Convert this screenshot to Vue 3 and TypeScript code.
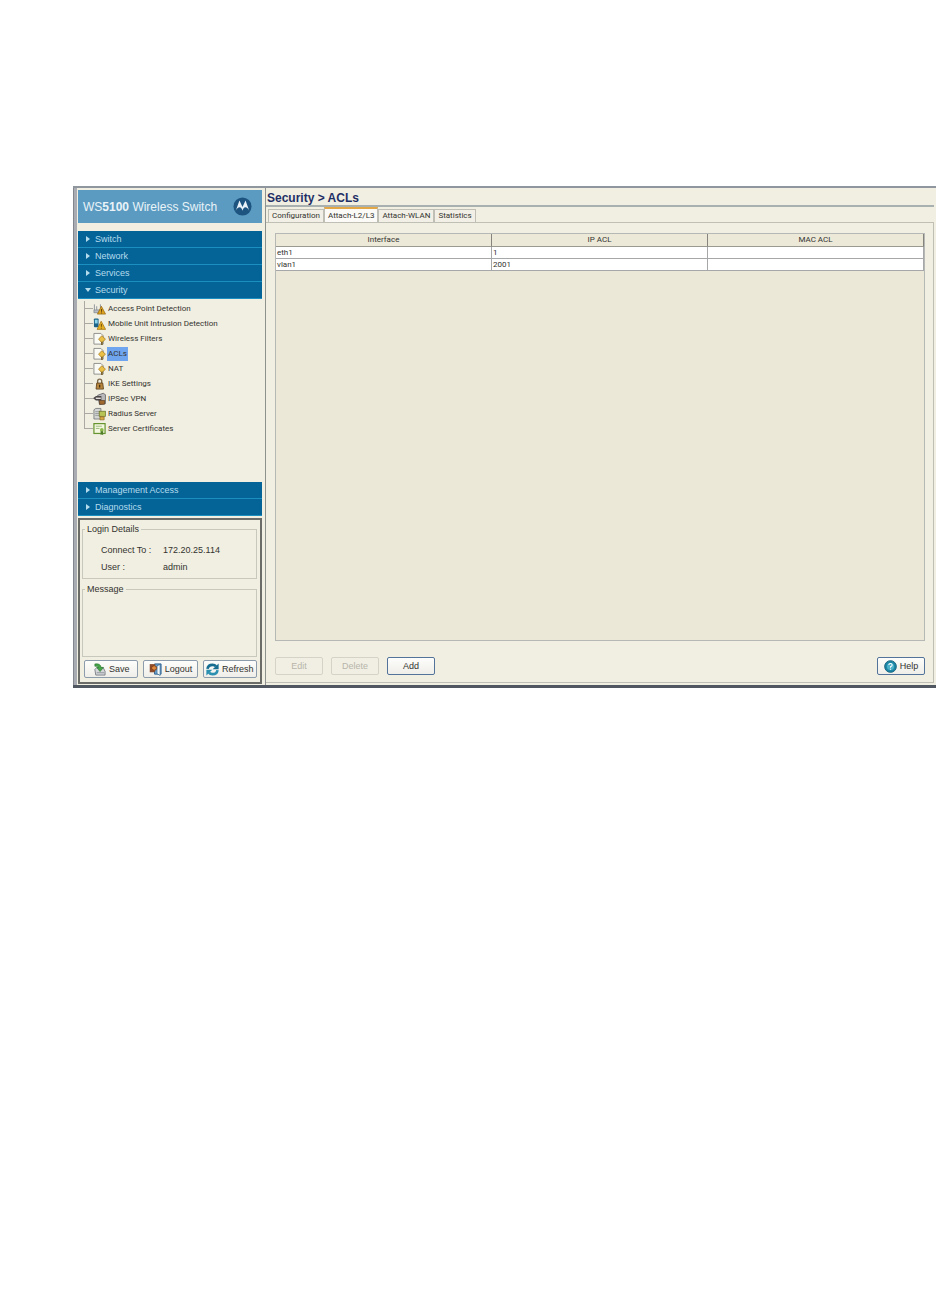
<script setup lang="ts">
import { ref } from 'vue'

type IconName = 'ap' | 'mobile' | 'filter' | 'lock' | 'vpn' | 'radius' | 'cert'

interface TreeItem {
  label: string
  icon: IconName
}

const topSections: string[] = ['Switch', 'Network', 'Services', 'Security']
const bottomSections: string[] = ['Management Access', 'Diagnostics']
const openSection = 'Security'

const items: TreeItem[] = [
  { label: 'Access Point Detection', icon: 'ap' },
  { label: 'Mobile Unit Intrusion Detection', icon: 'mobile' },
  { label: 'Wireless Filters', icon: 'filter' },
  { label: 'ACLs', icon: 'filter' },
  { label: 'NAT', icon: 'filter' },
  { label: 'IKE Settings', icon: 'lock' },
  { label: 'IPSec VPN', icon: 'vpn' },
  { label: 'Radius Server', icon: 'radius' },
  { label: 'Server Certificates', icon: 'cert' },
]
const selected = ref('ACLs')

const tabs: string[] = ['Configuration', 'Attach-L2/L3', 'Attach-WLAN', 'Statistics']
const activeTab = ref('Attach-L2/L3')

const columns: string[] = ['Interface', 'IP ACL', 'MAC ACL']
const rows: string[][] = [
  ['eth1', '1', ''],
  ['vlan1', '2001', ''],
]
</script>

<template>
  <div class="page">
    <div class="window">
      <aside class="side">
        <header class="brand">
          <span class="brand-name">WS<b>5100</b> Wireless Switch</span>
          <svg class="logo" viewBox="0 0 20 20" aria-hidden="true">
            <circle cx="10" cy="10" r="9.5" fill="#1d5480" />
            <path d="M2.8 14.8 6.8 3.8 10 10.6 13.2 3.8 17.2 14.8C16 12 14.6 10.8 13 10.8 11.6 10.8 10.7 12.2 10 14.4 9.3 12.2 8.4 10.8 7 10.8 5.4 10.8 4 12 2.8 14.8Z" fill="#e8f2f8" />
          </svg>
        </header>

        <nav class="nav">
          <button v-for="s in topSections" :key="s" type="button" class="section">
            <svg class="arrow" viewBox="0 0 6 6" aria-hidden="true">
              <path :d="s === openSection ? 'M0 1H6L3 5Z' : 'M1 0V6L5 3Z'" fill="#b5dced" />
            </svg>
            {{ s }}
          </button>

          <ul class="tree">
            <li v-for="item in items" :key="item.label" class="node">
              <svg class="icon" viewBox="0 0 14 14" aria-hidden="true">
                <g v-if="item.icon === 'ap'">
                  <path d="M1.5 2V8M4 4V8M8 2V6" stroke="#8d9299" fill="none" />
                  <path d="M1 8H8V11H1Z" fill="#b9bdc4" stroke="#777d86" stroke-width=".7" />
                  <path d="M9 4 13.5 12.5H4.8Z" fill="#dda422" stroke="#96680f" stroke-width=".8" />
                  <path d="M9.2 7V10M9.2 10.8V11.8" stroke="#5c3b06" />
                </g>
                <g v-else-if="item.icon === 'mobile'">
                  <rect x="1" y="1" width="5" height="9.5" rx="1" fill="#1b6387" />
                  <rect x="2" y="2.4" width="3" height="4" fill="#8ed5ed" />
                  <path d="M8.8 4 13.6 12.8H4.4Z" fill="#e5b123" stroke="#a37211" stroke-width=".8" />
                  <path d="M9 7V10M9 11V12" stroke="#694509" />
                </g>
                <g v-else-if="item.icon === 'filter'">
                  <path d="M1 1H8.5L11 3.5V12.5H1Z" fill="#fbfbf6" stroke="#8b8b89" />
                  <path d="M9.5 3.4 13.4 7.2 9.5 11 6 7.2Z" fill="#e9bf45" stroke="#a47a1e" stroke-width=".8" />
                  <path d="M9.6 10V13.4" stroke="#70551f" stroke-width="1.6" />
                </g>
                <g v-else-if="item.icon === 'lock'">
                  <path d="M5 6V4Q5 1.7 7.2 1.7T9.4 4V6" fill="none" stroke="#7d6849" stroke-width="1.5" />
                  <path d="M4 6H10.5L11.3 12.5H3.3Z" fill="#b7863e" stroke="#5b3f1b" stroke-width=".9" />
                  <path d="M7.2 7.8V10.8" stroke="#3d2811" stroke-width="1.3" />
                </g>
                <g v-else-if="item.icon === 'vpn'">
                  <path d="M5 3 11 .8 13.4 2.4V12L7 13Z" fill="#b9b9bb" stroke="#565559" stroke-width=".8" />
                  <path d="M0 6.3 3.2 3.8H9V8.6H3.2Z" fill="#4b4748" />
                  <path d="M3 6.2H8.4" stroke="#f3eee9" stroke-width="1.4" />
                  <rect x="7.2" y="8.6" width="5.2" height="4" fill="#a0692f" stroke="#59391a" stroke-width=".7" />
                </g>
                <g v-else-if="item.icon === 'radius'">
                  <path d="M1 2.5 3 1H8.5V12.4H1Z" fill="#d4d6d3" stroke="#73777a" stroke-width=".9" />
                  <path d="M2.4 4.5H7M2.4 6.5H7M2.4 8.5H7" stroke="#898d8f" stroke-width=".8" />
                  <rect x="6.7" y="4" width="6.6" height="5.5" fill="#b7c455" stroke="#687225" stroke-width=".8" />
                  <path d="M7.5 10H12V13.3H7.5Z" fill="#d8a944" stroke="#896521" stroke-width=".7" />
                </g>
                <g v-else>
                  <rect x="1" y="1.2" width="12" height="10.6" fill="#f3f7df" stroke="#66952f" stroke-width="1.3" />
                  <path d="M3 4H9.5M3 6.4H7" stroke="#8fae70" stroke-width=".9" />
                  <circle cx="9.5" cy="8" r="2" fill="#8cb84b" />
                  <path d="M8.2 9.5V13.8L9.5 12.6 10.9 13.8V9.5" fill="#4f7d25" />
                </g>
              </svg>
              <button
                type="button"
                class="leaf"
                :class="{ selected: selected === item.label }"
                @click="selected = item.label"
              >{{ item.label }}</button>
            </li>
          </ul>

          <button v-for="s in bottomSections" :key="s" type="button" class="section">
            <svg class="arrow" viewBox="0 0 6 6" aria-hidden="true">
              <path d="M1 0V6L5 3Z" fill="#b5dced" />
            </svg>
            {{ s }}
          </button>
        </nav>

        <section class="status">
          <fieldset class="group login">
            <legend>Login Details</legend>
            <dl class="details">
              <dt>Connect To :</dt>
              <dd>172.20.25.114</dd>
              <dt>User :</dt>
              <dd>admin</dd>
            </dl>
          </fieldset>
          <fieldset class="group message">
            <legend>Message</legend>
          </fieldset>
          <div class="actions">
            <button type="button" class="btn">
              <svg class="btn-icon" viewBox="0 0 14 14" aria-hidden="true">
                <path d="M2 7 4 5H11L13 9V13H3Z" fill="#d5d7da" stroke="#70757c" stroke-width=".9" />
                <path d="M4 10.5H12" stroke="#8e9299" />
                <path d="M2 1Q8 0 8.8 4.8H11.4L7.6 9.2 4 4.8H6Q5.5 3 2 3.5Z" fill="#47a548" stroke="#24702c" stroke-width=".6" />
              </svg>
              Save
            </button>
            <button type="button" class="btn">
              <svg class="btn-icon" viewBox="0 0 14 14" aria-hidden="true">
                <path d="M6 1H13V12H6Z" fill="#6fa6d2" stroke="#285c8c" />
                <path d="M8.6 3 12 1.5V13.4L8.6 11.5Z" fill="#f2f7fa" stroke="#316795" stroke-width=".8" />
                <path d="M.8 1.2H6V10H.8Z" fill="#8a4a2b" />
                <path d="M6.5 2 2 5.4 6.5 8.8V6.8H8.2V4H6.5Z" fill="#e28a3c" stroke="#79330f" stroke-width=".7" />
              </svg>
              Logout
            </button>
            <button type="button" class="btn">
              <svg class="btn-icon" viewBox="0 0 14 14" aria-hidden="true">
                <path d="M1.6 6.4Q2.2 2 7 2 9.5 2 10.8 3.6" fill="none" stroke="#176e91" stroke-width="2.8" />
                <path d="M13.6 .6V6.8H7.2Z" fill="#176e91" />
                <path d="M12.4 7.6Q11.8 12 7 12 4.5 12 3.2 10.4" fill="none" stroke="#2c91b0" stroke-width="2.8" />
                <path d="M.4 13.4V7.2H6.8Z" fill="#2c91b0" />
              </svg>
              Refresh
            </button>
          </div>
        </section>
      </aside>

      <main class="main">
        <h1 class="title">Security &gt; ACLs</h1>
        <div class="tabs" role="tablist">
          <button
            v-for="t in tabs"
            :key="t"
            type="button"
            role="tab"
            class="tab"
            :class="{ active: t === activeTab }"
            :aria-selected="t === activeTab"
            @click="activeTab = t"
          >{{ t }}</button>
        </div>
        <div class="panel">
          <div class="grid-box">
            <table class="grid">
              <thead>
                <tr><th v-for="c in columns" :key="c" scope="col">{{ c }}</th></tr>
              </thead>
              <tbody>
                <tr v-for="r in rows" :key="r[0]">
                  <td v-for="(cell, i) in r" :key="i">{{ cell }}</td>
                </tr>
              </tbody>
            </table>
          </div>
          <div class="footer">
            <button type="button" class="btn wide" disabled>Edit</button>
            <button type="button" class="btn wide" disabled>Delete</button>
            <button type="button" class="btn wide strong">Add</button>
            <button type="button" class="btn wide strong help">
              <svg class="btn-icon" viewBox="0 0 14 14" aria-hidden="true">
                <circle cx="7" cy="7" r="6.3" fill="#1d87a6" stroke="#155f7b" />
                <circle cx="7" cy="7" r="3.8" fill="#4db2ca" />
                <path d="M5.2 5.4Q5.3 3.8 7 3.8T8.8 5.3Q8.8 6.3 7 7.3V8.3M7 9.3V10.4" fill="none" stroke="#fff" stroke-width="1.2" />
              </svg>
              Help
            </button>
          </div>
        </div>
      </main>
    </div>
  </div>
</template>

<style>
body {
  margin: 0;
  background: #fff;
}
</style>

<style scoped>
.page {
  padding: 186px 1px 0 73px;
  font-family: "Liberation Sans", Arial, sans-serif;
  font-size: 9px;
  color: #33332f;
}
.page *,
.page *::before,
.page *::after {
  box-sizing: border-box;
}
button {
  font: inherit;
  color: inherit;
  margin: 0;
  cursor: pointer;
}
.window {
  display: flex;
  background: #f1efe2;
  border-top: 2px solid #90969d;
  border-bottom: 3px solid #505761;
}
.side {
  flex: 0 0 192px;
  display: flex;
  flex-direction: column;
  padding: 2px 3px 1px 4px;
  border-left: 1px solid #83868c;
  box-shadow: inset 3px 0 #a9acb3;
}
.brand {
  display: flex;
  align-items: center;
  justify-content: space-between;
  height: 33px;
  padding: 0 10px 0 5px;
  background: #5b9bc1;
  color: #e9f3f8;
  font-size: 12px;
  white-space: nowrap;
}
.logo {
  width: 19px;
  height: 19px;
}
.nav {
  display: flex;
  flex-direction: column;
  margin-top: 8px;
}
.section {
  display: flex;
  align-items: center;
  gap: 4px;
  height: 17px;
  padding: 0 7px;
  border: 0;
  border-bottom: 1px solid #1a8fc0;
  background: #046397;
  color: #b5dced;
  font-size: 9px;
  text-align: left;
}
.arrow {
  width: 6px;
  height: 6px;
}
.tree {
  list-style: none;
  margin: 0;
  padding: 2px 0 0 6px;
  min-height: 183px;
}
.node {
  position: relative;
  display: flex;
  align-items: center;
  gap: 1px;
  height: 15px;
  padding-left: 9px;
}
.node::before {
  content: "";
  position: absolute;
  left: 0;
  top: 0;
  height: 15px;
  border-left: 1px solid #aaa9a3;
}
.node:last-child::before {
  height: 8px;
}
.node::after {
  content: "";
  position: absolute;
  left: 0;
  top: 7px;
  width: 9px;
  border-top: 1px solid #aaa9a3;
}
.icon {
  width: 13px;
  height: 14px;
}
.leaf {
  height: 14px;
  padding: 0 1px;
  border: 0;
  background: none;
  font-family: Roboto, Tahoma, sans-serif;
  font-size: 8px;
  line-height: 14px;
  white-space: nowrap;
}
.leaf.selected {
  background: #6fa5ef;
}
.status {
  display: flex;
  flex-direction: column;
  flex: 1;
  margin-top: 2px;
  padding: 4px 3px 4px 2px;
  border: 2px solid #6b6b67;
}
.group {
  margin: 0;
  min-width: 0;
  padding: 0 0 0 18px;
  border: 1px solid #c9c8bd;
}
.group legend {
  margin-left: -16px;
  padding: 0 2px;
  line-height: 11px;
}
.login {
  height: 55px;
}
.message {
  height: 73px;
  margin-top: 5px;
}
.details {
  display: grid;
  grid-template-columns: 62px 1fr;
  margin: 7px 0 0;
  line-height: 17px;
}
.details dd {
  margin: 0;
}
.actions {
  display: flex;
  justify-content: space-between;
  gap: 5px;
  margin-top: 3px;
  padding: 0 0 0 2px;
}
.btn {
  display: flex;
  align-items: center;
  justify-content: center;
  gap: 3px;
  flex: 1 1 0;
  height: 18px;
  padding: 0;
  border: 1px solid #8d9cad;
  border-radius: 2px;
  background: linear-gradient(#fdfdfb, #efeee9);
  font-size: 9px;
  white-space: nowrap;
}
.btn-icon {
  width: 13px;
  height: 13px;
}
.btn.wide {
  flex: 0 0 48px;
}
.btn.strong {
  border-color: #53739b;
}
.btn:disabled {
  border-color: #d5d3c8;
  background: #f1efe4;
  color: #b7b5aa;
  cursor: default;
}
.main {
  flex: 1;
  min-width: 0;
  display: flex;
  flex-direction: column;
  padding: 2px 2px 2px 0;
  border-left: 1px solid #8f918f;
}
.title {
  margin: 0;
  height: 17px;
  padding-left: 1px;
  border-bottom: 2px solid #a9b1b0;
  color: #1f2f66;
  font-size: 12px;
  line-height: 16px;
}
.tabs {
  display: flex;
  align-items: flex-end;
  height: 15px;
  padding-left: 2px;
}
.tab {
  height: 13px;
  padding: 0 3px;
  border: 1px solid #c0bfb5;
  border-bottom: 0;
  background: #f2f0e6;
  font-family: Roboto, Tahoma, sans-serif;
  font-size: 8px;
  line-height: 12px;
  white-space: nowrap;
}
.tab.active {
  height: 15px;
  border-top: 2px solid #e3a746;
  background: #fbfaf6;
}
.panel {
  flex: 1;
  display: flex;
  flex-direction: column;
  padding: 10px 8px 7px 9px;
  border: 1px solid #c0bfb5;
  border-left: 0;
}
.grid-box {
  flex: 1;
  border: 1px solid #b5b8b5;
  background: #ebe8d7;
}
.grid {
  width: 100%;
  table-layout: fixed;
  border-collapse: separate;
  border-spacing: 0;
  font-family: Roboto, Tahoma, sans-serif;
  font-size: 8px;
}
.grid th {
  height: 13px;
  padding: 0;
  border-right: 1px solid #85857d;
  border-bottom: 1px solid #9b9a90;
  background: #ece9d9;
  font-weight: 400;
  line-height: 12px;
}
.grid td {
  height: 12px;
  padding: 0 1px;
  border-right: 1px solid #a5a7a9;
  border-bottom: 1px solid #a5a7a9;
  background: #fff;
  line-height: 11px;
}
.footer {
  display: flex;
  gap: 8px;
  margin-top: 16px;
}
.footer .help {
  margin-left: auto;
}
</style>
